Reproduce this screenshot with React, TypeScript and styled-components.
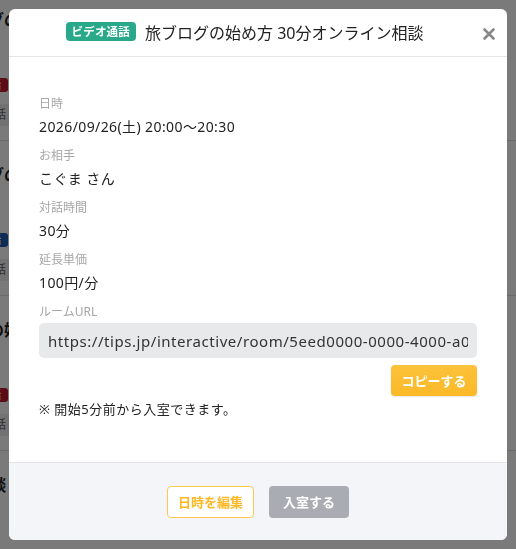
import React from "react";
import styled, { createGlobalStyle } from "styled-components";

const GlobalStyle = createGlobalStyle`
  html, body {
    margin: 0;
    padding: 0;
    background: #ffffff;
  }
  body {
    font-family: "Noto Sans", "Noto Sans CJK JP", sans-serif;
    color: #222;
  }
  * {
    box-sizing: border-box;
  }
`;

// background page (only a thin strip of it peeks out from behind the modal)
const Page = styled.div`
  height: 549px;
  overflow: hidden;
  margin-left: -60px;
  margin-top: -14px;
  display: flex;
  flex-direction: column;
`;

const Card = styled.div`
  display: flex;
  flex-direction: column;
  padding: 22px 0 14px;
  border-bottom: 1px solid #ddd;
  flex-shrink: 0;
`;

const CardTitle = styled.div`
  font-size: 16px;
  font-weight: 700;
  line-height: 24px;
`;

const CardBadge = styled.span<{ $color: string }>`
  align-self: flex-start;
  margin: 46px 0 2px;
  background: ${({ $color }) => $color};
  color: #fff;
  font-size: 11px;
  font-weight: 700;
  line-height: 14px;
  padding: 0 6px;
  border-radius: 3px;
  width: 68px;
`;

const CardMeta = styled.div`
  margin-top: 10px;
  background: #eee;
  color: #666;
  font-size: 12px;
  line-height: 22px;
  padding: 0 4px;
  width: 70px;
  text-align: right;
`;

const Overlay = styled.div`
  position: fixed;
  inset: 0;
  background: rgba(0, 0, 0, 0.52);
  padding: 9px;
  display: flex;
  justify-content: center;
  align-items: flex-start;
`;

const Modal = styled.div`
  width: 498px;
  height: 531px;
  background: #fff;
  border-radius: 6px;
  display: flex;
  flex-direction: column;
  overflow: hidden;
`;

const Header = styled.div`
  position: relative;
  height: 48px;
  border-bottom: 1px solid #e6e6e6;
  display: flex;
  align-items: center;
  justify-content: center;
  gap: 9px;
  padding: 0 27px 2px 0;
`;

const Badge = styled.span`
  background: #2aa98a;
  color: #fff;
  font-size: 11.5px;
  font-weight: 700;
  line-height: 19px;
  height: 19px;
  padding: 0 6px;
  border-radius: 4px;
  letter-spacing: 0.2px;
`;

const Title = styled.h2`
  margin: 0;
  font-size: 16px;
  font-weight: 400;
  color: #222;
`;

const Close = styled.button`
  position: absolute;
  right: 8px;
  top: 15px;
  width: 20px;
  height: 20px;
  padding: 0;
  border: none;
  background: none;
  display: flex;
  align-items: center;
  justify-content: center;
  cursor: pointer;
`;

const Body = styled.div`
  flex: 1;
  padding: 38px 30px 0;
  display: flex;
  flex-direction: column;
`;

const Field = styled.div`
  display: flex;
  flex-direction: column;
  gap: 4px;
  margin-bottom: 9px;
`;

const Label = styled.div`
  font-size: 12px;
  line-height: 17px;
  color: #a6a6a6;
`;

const Value = styled.div`
  font-size: 14px;
  line-height: 22px;
  letter-spacing: 0.4px;
  color: #222;
`;

const UrlBox = styled.input`
  width: 100%;
  height: 35px;
  border: none;
  outline: none;
  background: #e8e9eb;
  border-radius: 5px;
  padding: 0 9px;
  font-family: "Noto Sans", "Noto Sans CJK JP", sans-serif;
  font-size: 15px;
  letter-spacing: 0.55px;
  color: #333;
  margin-top: 3px;
`;

const CopyRow = styled.div`
  display: flex;
  justify-content: flex-end;
  margin-top: 7px;
`;

const CopyButton = styled.button`
  width: 86px;
  height: 31px;
  border: none;
  border-radius: 4px;
  background: linear-gradient(#fcc23a, #fbb928);
  color: #fff;
  font-family: "Noto Sans", "Noto Sans CJK JP", sans-serif;
  font-size: 13px;
  font-weight: 700;
  box-shadow: 0 1px 2px rgba(0, 0, 0, 0.1);
`;

const Note = styled.p`
  margin: 3px 0 0;
  font-size: 13px;
  line-height: 20px;
  letter-spacing: 0.5px;
  color: #222;
`;

const Footer = styled.div`
  height: 78px;
  background: #f4f5f8;
  border-top: 1px solid #e3e4e7;
  display: flex;
  align-items: center;
  justify-content: center;
  gap: 15px;
`;

const FooterButton = styled.button<{ $variant: "outline" | "disabled" }>`
  height: 32px;
  border-radius: 4px;
  font-family: "Noto Sans", "Noto Sans CJK JP", sans-serif;
  font-size: 13px;
  font-weight: 700;
  padding: 0;
  ${({ $variant }) =>
    $variant === "outline"
      ? `
    width: 87px;
    background: #fff;
    color: #fbb928;
    border: 1px solid #fbc94f;
  `
      : `
    width: 80px;
    background: #a9adb3;
    color: #fff;
    border: none;
  `}
`;

const fields = [
  { label: "日時", value: "2026/09/26(土) 20:00〜20:30" },
  { label: "お相手", value: "こぐま さん" },
  { label: "対話時間", value: "30分" },
  { label: "延長単価", value: "100円/分" },
];

const cards = [
  { title: "旅ブログのタ", color: "#c0192b" },
  { title: "旅ブログのタ", color: "#1e5fb4" },
  { title: "ブログの始め方", color: "#c0192b" },
  { title: "30分相談", color: "#1e5fb4" },
];

export default function App() {
  return (
    <>
      <GlobalStyle />
      <Page>
        {cards.map((c, i) => (
          <Card key={i}>
            <CardTitle>{c.title}</CardTitle>
            <CardBadge $color={c.color}>ビデオ通話</CardBadge>
            <CardMeta>文字対話</CardMeta>
          </Card>
        ))}
      </Page>
      <Overlay>
        <Modal>
          <Header>
            <Badge>ビデオ通話</Badge>
            <Title>旅ブログの始め方 30分オンライン相談</Title>
            <Close aria-label="閉じる">
              <svg width="12" height="12" viewBox="0 0 12 12">
                <path
                  d="M1.5 1.5L10.5 10.5M10.5 1.5L1.5 10.5"
                  stroke="#888"
                  strokeWidth="2.6"
                  strokeLinecap="round"
                />
              </svg>
            </Close>
          </Header>
          <Body>
            {fields.map((f) => (
              <Field key={f.label}>
                <Label>{f.label}</Label>
                <Value>{f.value}</Value>
              </Field>
            ))}
            <Label>ルームURL</Label>
            <UrlBox
              readOnly
              value="https://tips.jp/interactive/room/5eed0000-0000-4000-a000-000000000000"
            />
            <CopyRow>
              <CopyButton>コピーする</CopyButton>
            </CopyRow>
            <Note>※ 開始5分前から入室できます。</Note>
          </Body>
          <Footer>
            <FooterButton $variant="outline">日時を編集</FooterButton>
            <FooterButton $variant="disabled">入室する</FooterButton>
          </Footer>
        </Modal>
      </Overlay>
    </>
  );
}
